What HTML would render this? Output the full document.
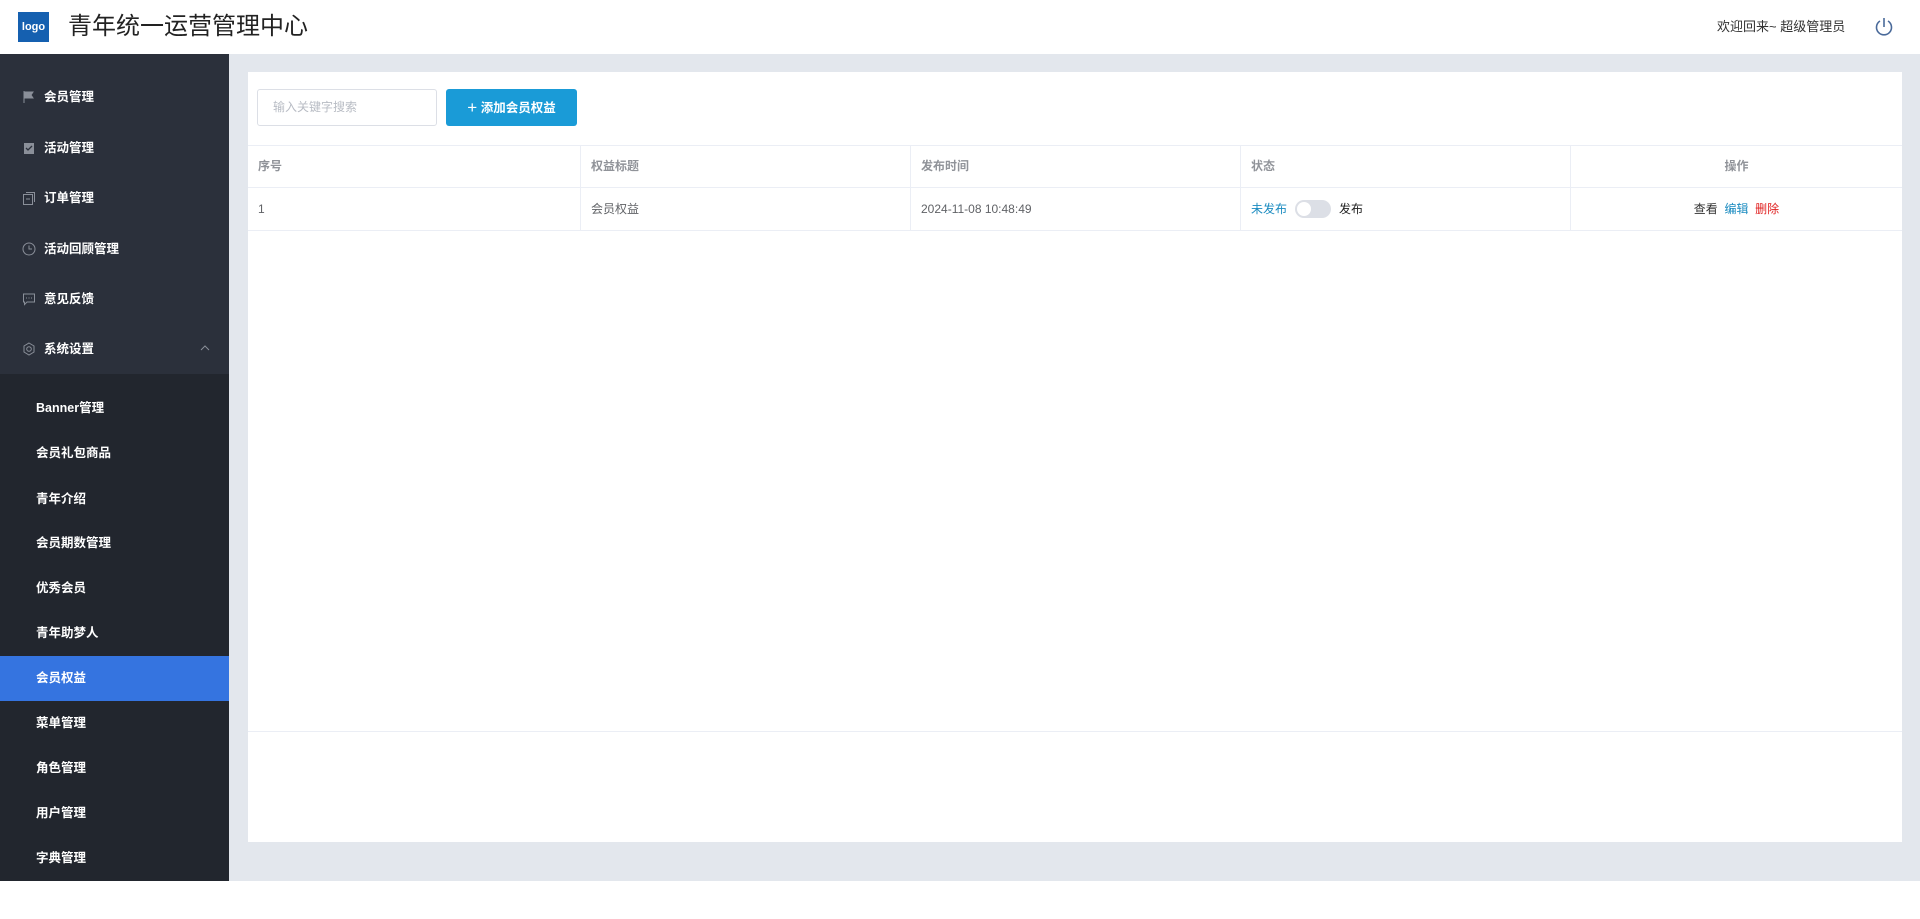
<!DOCTYPE html>
<html><head><meta charset="utf-8"><style>
*{margin:0;padding:0;box-sizing:border-box}
html,body{width:1920px;height:919px;overflow:hidden}
body{background:#fff;font-family:"Liberation Sans","Noto Sans CJK SC",sans-serif;position:relative}
.hdr{position:absolute;left:0;top:0;width:1920px;height:54px;background:#fff}
.logo{position:absolute;left:18px;top:12px;width:31px;height:30px;background:#1560b0;color:#fff;font-size:11px;font-weight:bold;text-align:center;line-height:30px}
.title{position:absolute;left:68px;top:11px;font-size:24px;color:#222;line-height:32px}
.welcome{position:absolute;left:1717px;top:18px;font-size:13px;color:#333;line-height:18px}
.side{position:absolute;left:0;top:54px;width:229px;height:827px;background:#2b303b;overflow:hidden}
.sub{position:absolute;left:0;top:320px;width:229px;height:507px;background:#22262e}
.mi{position:absolute;left:0;width:229px;color:#fff;font-size:12.5px;font-weight:bold;line-height:20px}
.mi svg{position:absolute;left:22px;top:3px}
.mi span{position:absolute;left:44px;top:0;white-space:nowrap}
.si{position:absolute;left:0;width:229px;height:45px;color:#fff;font-size:12.5px;font-weight:bold;line-height:45px;padding-left:36px}
.act{background:#3574e0}
.main{position:absolute;left:229px;top:54px;width:1691px;height:827px;background:#e3e7ed}
.card{position:absolute;left:248px;top:72px;width:1654px;height:770px;background:#fff}
.inp{position:absolute;left:257px;top:89px;width:180px;height:37px;border:1px solid #dcdfe6;border-radius:3px;font-size:12px;color:#b8bcc4;line-height:35px;padding-left:15px}
.btn{position:absolute;left:446px;top:89px;width:131px;height:37px;background:#1a9bd7;border-radius:3px;color:#fff;font-size:12.5px;font-weight:bold;line-height:37px;text-align:center}
.row{position:absolute;left:248px;width:1654px;border-bottom:1px solid #ebeef5}
.cell{position:absolute;top:0;height:100%;border-left:1px solid #ebeef5;font-size:12px;padding-left:10px}
</style></head><body>
<div class="hdr">
<div class="logo">logo</div>
<div class="title">青年统一运营管理中心</div>
<div class="welcome">欢迎回来~ 超级管理员</div>
<svg style="position:absolute;left:1874px;top:16px" width="20" height="22" viewBox="0 0 20 22"><path d="M6 5 A7.5 7.5 0 1 0 14 5" fill="none" stroke="#4a6a9a" stroke-width="1.6"/><path d="M10 2V11" stroke="#4a6a9a" stroke-width="1.6"/></svg>
</div>
<div class="side">
<div class="sub"></div>
</div>
<div class="mi" style="top:87px"><svg width="14" height="14"><path d="M2 1V13M2 2H11L9 5L11 8H2" fill="#8a8f99" stroke="#8a8f99"/></svg><span>会员管理</span></div>
<div class="mi" style="top:138px"><svg width="14" height="14"><rect x="2" y="2" width="10" height="11" fill="#8a8f99"/><path d="M4 7L6 9L10 5" stroke="#2b303b" fill="none" stroke-width="1.3"/></svg><span>活动管理</span></div>
<div class="mi" style="top:188px"><svg width="14" height="14"><rect x="1.5" y="3.5" width="9" height="10" fill="none" stroke="#8a8f99"/><path d="M4 1.5H12.5V11" fill="none" stroke="#8a8f99"/><path d="M4 8H8" stroke="#8a8f99"/></svg><span>订单管理</span></div>
<div class="mi" style="top:239px"><svg width="14" height="14"><circle cx="7" cy="7" r="6" fill="none" stroke="#8a8f99"/><path d="M7 3.5V7H10" fill="none" stroke="#8a8f99"/></svg><span>活动回顾管理</span></div>
<div class="mi" style="top:289px"><svg width="14" height="14"><path d="M1.5 2H12.5V10H5L2.5 12.5V10H1.5Z" fill="none" stroke="#8a8f99"/><path d="M4 6H5M6.5 6H7.5M9 6H10" stroke="#8a8f99"/></svg><span>意见反馈</span></div>
<div class="mi" style="top:339px"><svg width="14" height="14"><circle cx="7" cy="7" r="2.3" fill="none" stroke="#8a8f99"/><path d="M7 1L12 4V10L7 13L2 10V4Z" fill="none" stroke="#8a8f99"/></svg><span>系统设置</span><svg style="left:200px;top:6px" width="10" height="6"><path d="M1 5L5 1L9 5" fill="none" stroke="#8a8f99"/></svg></div>
<div class="si" style="top:386px">Banner管理</div>
<div class="si" style="top:431px">会员礼包商品</div>
<div class="si" style="top:477px">青年介绍</div>
<div class="si" style="top:521px">会员期数管理</div>
<div class="si" style="top:566px">优秀会员</div>
<div class="si" style="top:611px">青年助梦人</div>
<div class="si act" style="top:656px">会员权益</div>
<div class="si" style="top:701px">菜单管理</div>
<div class="si" style="top:746px">角色管理</div>
<div class="si" style="top:791px">用户管理</div>
<div class="si" style="top:836px">字典管理</div>
<div class="main"></div>
<div class="card"></div>
<div class="inp">输入关键字搜索</div>
<div class="btn"><span style="font-size:17px;font-weight:normal;vertical-align:-1px">+</span> 添加会员权益</div>
<div class="row" style="top:145px;height:43px;border-top:1px solid #ebeef5;color:#909399;font-weight:bold;line-height:41px">
<div class="cell" style="left:0;border-left:none">序号</div>
<div class="cell" style="left:332px">权益标题</div>
<div class="cell" style="left:662px">发布时间</div>
<div class="cell" style="left:992px">状态</div>
<div class="cell" style="left:1322px;width:332px;text-align:center;padding:0">操作</div>
</div>
<div class="row" style="top:188px;height:43px;color:#606266;line-height:42px">
<div class="cell" style="left:0;border-left:none">1</div>
<div class="cell" style="left:332px">会员权益</div>
<div class="cell" style="left:662px">2024-11-08 10:48:49</div>
<div class="cell" style="left:992px"><span style="color:#1a8bc0">未发布</span><span style="display:inline-block;width:36px;height:18px;border-radius:9px;background:#dcdfe6;vertical-align:-5px;margin:0 8px;position:relative"><span style="position:absolute;left:2px;top:2px;width:14px;height:14px;border-radius:7px;background:#fff"></span></span><span style="color:#222">发布</span></div>
<div class="cell" style="left:1322px;width:332px;text-align:center;padding:0"><span style="color:#333">查看</span>&nbsp; <span style="color:#1a8bc0">编辑</span>&nbsp; <span style="color:#e02020">删除</span></div>
</div>
<div style="position:absolute;left:248px;top:731px;width:1654px;border-top:1px solid #ebeef5"></div>
</body></html>
